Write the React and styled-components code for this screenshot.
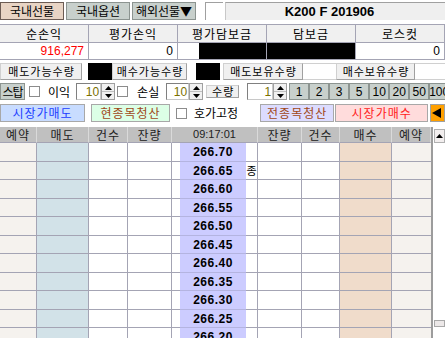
import React from 'react';
import styled, { createGlobalStyle } from 'styled-components';

const GlobalStyle = createGlobalStyle`
  html, body {
    margin: 0;
    padding: 0;
    background: #ffffff;
  }
  body {
    font-family: "Noto Sans CJK KR", "DejaVu Sans", sans-serif;
    font-size: 12px;
    color: #000000;
  }
  * {
    box-sizing: border-box;
  }
`;

const NUM_FONT = '"Liberation Sans", Arial, sans-serif';
const LINE = '#a4a4b4';

const Page = styled.div`
  width: 445px;
  height: 338px;
  overflow: hidden;
  display: flex;
  flex-direction: column;
  line-height: 1;
  white-space: nowrap;
`;

/* top tabs */
const TopBar = styled.div`
  display: flex;
  height: 22px;
  padding-top: 2px;
  gap: 2px;
`;

const Tab = styled.div`
  width: 64px;
  height: 18px;
  display: flex;
  align-items: center;
  justify-content: center;
  background: ${p => (p.$active ? '#e8d4c4' : '#c8d0cc')};
  border: 1px solid ${p => (p.$active ? '#6c5c54' : '#8c9490')};
  font-size: 12px;
`;

const CodeBlank = styled.div`
  width: 18px;
  height: 18px;
  margin-left: 7px;
  background: #ffffff;
  border-top: 1px solid #a0a0a0;
  border-left: 1px solid #a0a0a0;
`;

const CodeBox = styled.div`
  flex: 1;
  height: 18px;
  background: #efefef;
  border-top: 1px solid #a0a0a0;
  border-left: 1px solid #c8c8c8;
  display: flex;
  align-items: center;
  justify-content: center;
  padding-right: 12px;
  font-family: ${NUM_FONT};
  font-weight: bold;
  font-size: 13px;
`;

/* summary */
const Summary = styled.div`
  display: grid;
  grid-template-columns: repeat(5, 89px);
  grid-template-rows: 18px 17px;
  margin-top: 2px;
  border-top: 1px solid ${LINE};
`;

const SumHead = styled.div`
  background: #f0f0f0;
  border-right: 1px solid ${LINE};
  border-bottom: 1px solid ${LINE};
  display: flex;
  align-items: center;
  justify-content: center;
  letter-spacing: 1px;
`;

const SumValue = styled.div`
  border-right: 1px solid ${LINE};
  border-bottom: 1px solid ${LINE};
  display: flex;
  align-items: center;
  justify-content: flex-end;
  padding-right: ${p => (p.$masked ? 0 : 4)}px;
  color: ${p => p.$color || '#000000'};
  font-family: ${NUM_FONT};
  font-size: 12px;
  background: ${p => (p.$full ? '#000000' : '#ffffff')};
`;

const Mask = styled.div`
  width: ${p => p.$w}px;
  height: 100%;
  background: #000000;
`;

/* quantity row */
const QtyRow = styled.div`
  display: flex;
  height: 17px;
  margin-top: 3px;
`;

const FieldLabel = styled.div`
  width: ${p => p.$w}px;
  margin-left: ${p => p.$ml || 0}px;
  flex: none;
  background: #f0f0f0;
  border: 1px solid #d0d0d0;
  border-right-color: #a0a0a0;
  border-bottom-color: #a0a0a0;
  display: flex;
  align-items: center;
  justify-content: center;
  font-size: 11px;
  letter-spacing: 1px;
  padding-left: 1px;
`;

const BlackField = styled.div`
  width: ${p => p.$w}px;
  margin-left: ${p => p.$ml || 0}px;
  flex: none;
  background: #000000;
`;

const EmptyField = styled.div`
  width: ${p => p.$w}px;
  flex: ${p => (p.$grow ? 1 : 'none')};
  background: #ffffff;
  border-top: 1px solid #d0d0d0;
  border-bottom: 1px solid #d0d0d0;
`;

/* stop row */
const StopRow = styled.div`
  display: flex;
  align-items: center;
  height: 17px;
  margin-top: 3px;
`;

const StopButton = styled.div`
  width: 25px;
  height: 17px;
  flex: none;
  background: #c8d0cc;
  border: 1px solid #8c9490;
  display: flex;
  align-items: center;
  justify-content: center;
  font-size: 12px;
  letter-spacing: -1px;
`;

const Check = styled.div`
  width: 11px;
  height: 11px;
  margin-left: ${p => p.$ml}px;
  background: #ffffff;
  border: 1px solid #8c8c8c;
  flex: none;
`;

const Caption = styled.span`
  margin-left: ${p => p.$ml}px;
`;

const Spin = styled.div`
  display: flex;
  height: 17px;
  margin-left: ${p => p.$ml}px;
  flex: none;
`;

const SpinInput = styled.div`
  width: ${p => p.$w}px;
  background: #ffffff;
  border: 1px solid #c8c8c8;
  border-top-color: #808080;
  border-left-color: #808080;
  color: #7a7000;
  display: flex;
  align-items: center;
  justify-content: flex-end;
  padding-right: 1px;
  font-family: ${NUM_FONT};
  font-size: 12px;
`;

const SpinArrows = styled.div`
  width: 14px;
  display: flex;
  flex-direction: column;
  border: 1px solid #a0a0a0;
  background: #f0f0f0;
`;

const ArrowCell = styled.div`
  flex: 1;
  display: flex;
  align-items: center;
  justify-content: center;
  border-top: ${p => (p.$down ? '1px solid #c0c0c0' : 'none')};
`;

const QtyButtons = styled.div`
  display: flex;
  margin-left: 2px;
`;

const QtyButton = styled.div`
  width: 20px;
  height: 17px;
  flex: none;
  background: #c8d0cc;
  border: 1px solid #8c9490;
  display: flex;
  align-items: center;
  justify-content: center;
  font-family: ${NUM_FONT};
  font-size: 12px;
`;

/* action row */
const ActionRow = styled.div`
  display: flex;
  align-items: center;
  height: 18px;
  margin-top: 4px;
`;

const ActionButton = styled.div`
  width: ${p => p.$w}px;
  height: 18px;
  margin-left: ${p => p.$ml || 0}px;
  background: ${p => p.$bg};
  color: ${p => p.$fg};
  border: 1px solid #a8a8a8;
  display: flex;
  align-items: center;
  justify-content: center;
  letter-spacing: 1px;
  flex: none;
`;

const OrangeButton = styled.div`
  flex: 1;
  height: 18px;
  margin-left: 2px;
  background: #ffa000;
  border: 1px solid #a0a0a0;
  display: flex;
  align-items: center;
  justify-content: flex-start;
  padding-left: 1px;
`;

/* order book */
const Book = styled.div`
  display: flex;
  margin-top: 5px;
  flex: 1;
  min-height: 0;
`;

const Grid = styled.div`
  display: grid;
  grid-template-columns: 37px 52px 39px 44px 8px 66px 12px 44px 38px 52px 39px;
  grid-template-rows: 16px repeat(6, 19px 18px);
  border-right: 2px solid #9c9c9c;
  align-content: start;
`;

const HeadCell = styled.div`
  grid-column: span ${p => p.$span || 1};
  background: #c0c0c0;
  border-right: 1px solid #dadada;
  border-bottom: 1px solid ${LINE};
  display: flex;
  align-items: center;
  justify-content: center;
  color: #202020;
  font-family: ${p => (p.$num ? NUM_FONT : 'inherit')};
  font-size: ${p => (p.$num ? 11 : 12)}px;
  letter-spacing: ${p => (p.$num ? 0 : 1)}px;
`;

const Cell = styled.div`
  background: ${p => p.$bg || '#ffffff'};
  border-right: ${p => (p.$noRight ? 'none' : `1px solid ${LINE}`)};
  border-bottom: 1px solid ${p => (p.$price ? '#b4b4e0' : LINE)};
  display: flex;
  align-items: center;
  justify-content: center;
  overflow: hidden;
`;

const Price = styled.span`
  font-family: ${NUM_FONT};
  font-weight: bold;
  font-size: 12px;
  letter-spacing: 0.5px;
`;

const Mark = styled.span`
  font-size: 11px;
`;

const Scrollbar = styled.div`
  flex: 1;
  display: flex;
  flex-direction: column;
  align-items: flex-end;
  padding-top: 2px;
`;

const ScrollUp = styled.div`
  width: 11px;
  height: 14px;
  background: #f2eeee;
  border: 1px solid #b0b0b0;
  display: flex;
  align-items: center;
  justify-content: center;
`;

const ScrollThumb = styled.div`
  width: 11px;
  height: 7px;
  margin-top: 177px;
  background: #ece8e8;
  border: 1px solid #a8a8a8;
`;

const Triangle = ({ dir = 'up', size = 7 }) => {
  const h = Math.ceil(size / 2);
  const points = {
    up: `0,${h} ${size / 2},0 ${size},${h}`,
    down: `0,0 ${size / 2},${h} ${size},0`,
  }[dir];
  return (
    <svg width={size} height={h} viewBox={`0 0 ${size} ${h}`}>
      <polygon points={points} fill="#000" />
    </svg>
  );
};

const LeftTriangle = () => (
  <svg width="9" height="10" viewBox="0 0 9 10">
    <polygon points="9,0 0,5 9,10" fill="#000" />
  </svg>
);

const Spinner = ({ ml, w, value }) => (
  <Spin $ml={ml}>
    <SpinInput $w={w}>{value}</SpinInput>
    <SpinArrows>
      <ArrowCell><Triangle dir="up" /></ArrowCell>
      <ArrowCell $down><Triangle dir="down" /></ArrowCell>
    </SpinArrows>
  </Spin>
);

const prices = ['266.70', '266.65', '266.60', '266.55', '266.50', '266.45', '266.40', '266.35', '266.30', '266.25', '266.20', '266.15'];

const BookRow = ({ price, mark }) => (
  <>
    <Cell $bg="#f5f2ee" />
    <Cell $bg="#d2e2e8" />
    <Cell />
    <Cell />
    <Cell $noRight />
    <Cell $bg="#ccccff" $noRight $price>
      <Price>{price}</Price>
    </Cell>
    <Cell>{mark && <Mark>{mark}</Mark>}</Cell>
    <Cell />
    <Cell />
    <Cell $bg="#f0dccb" />
    <Cell $bg="#f5f2ee" $noRight />
  </>
);

export default function App() {
  return (
    <Page>
      <GlobalStyle />
      <TopBar>
        <Tab $active>국내선물</Tab>
        <Tab>국내옵션</Tab>
        <Tab>해외선물▼</Tab>
        <CodeBlank />
        <CodeBox>K200 F 201906</CodeBox>
      </TopBar>

      <Summary>
        <SumHead>순손익</SumHead>
        <SumHead>평가손익</SumHead>
        <SumHead>평가담보금</SumHead>
        <SumHead>담보금</SumHead>
        <SumHead>로스컷</SumHead>
        <SumValue $color="#ff0000">916,277</SumValue>
        <SumValue>0</SumValue>
        <SumValue $masked><Mask $w={67} /></SumValue>
        <SumValue $full />
        <SumValue>0</SumValue>
      </Summary>

      <QtyRow>
        <FieldLabel $w={82}>매도가능수량</FieldLabel>
        <BlackField $w={24} $ml={6} />
        <FieldLabel $w={75}>매수가능수량</FieldLabel>
        <BlackField $w={24} $ml={9} />
        <FieldLabel $w={80} $ml={3}>매도보유수량</FieldLabel>
        <EmptyField $w={33} />
        <FieldLabel $w={79}>매수보유수량</FieldLabel>
        <EmptyField $grow />
      </QtyRow>

      <StopRow>
        <StopButton>스탑</StopButton>
        <Check $ml={4} />
        <Caption $ml={8}>이익</Caption>
        <Spinner ml={6} w={25} value="10" />
        <Check $ml={2} />
        <Caption $ml={9}>손실</Caption>
        <Spinner ml={7} w={23} value="10" />
        <FieldLabel $w={33} $ml={3}>수량</FieldLabel>
        <Spinner ml={8} w={26} value="1" />
        <QtyButtons>
          {['1', '2', '3', '5', '10', '20', '50', '100'].map(q => (
            <QtyButton key={q}>{q}</QtyButton>
          ))}
        </QtyButtons>
      </StopRow>

      <ActionRow>
        <ActionButton $w={85} $bg="#c8dcff" $fg="#1a3cff">시장가매도</ActionButton>
        <ActionButton $w={79} $ml={6} $bg="#dcffe6" $fg="#a04818">현종목청산</ActionButton>
        <Check $ml={6} />
        <Caption $ml={7}>호가고정</Caption>
        <ActionButton $w={74} $ml={22} $bg="#dcdcff" $fg="#a04818">전종목청산</ActionButton>
        <ActionButton $w={93} $ml={1} $bg="#ffdcdc" $fg="#ff2020">시장가매수</ActionButton>
        <OrangeButton><LeftTriangle /></OrangeButton>
      </ActionRow>

      <Book>
        <Grid>
          <HeadCell>예약</HeadCell>
          <HeadCell>매도</HeadCell>
          <HeadCell>건수</HeadCell>
          <HeadCell>잔량</HeadCell>
          <HeadCell $span={3} $num>09:17:01</HeadCell>
          <HeadCell>잔량</HeadCell>
          <HeadCell>건수</HeadCell>
          <HeadCell>매수</HeadCell>
          <HeadCell>예약</HeadCell>
          {prices.map((p, i) => (
            <BookRow key={p} price={p} mark={i === 1 ? '종' : ''} />
          ))}
        </Grid>
        <Scrollbar>
          <ScrollUp><Triangle dir="up" /></ScrollUp>
          <ScrollThumb />
        </Scrollbar>
      </Book>
    </Page>
  );
}
